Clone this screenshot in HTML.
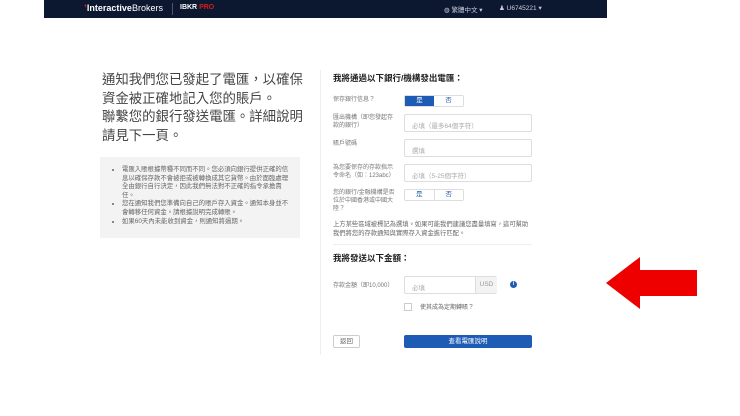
<!DOCTYPE html>
<html><head><meta charset="utf-8"><style>
*{margin:0;padding:0;box-sizing:border-box}
body{width:740px;height:416px;background:#fff;position:relative;overflow:hidden;font-family:"Liberation Sans","Noto Sans CJK TC",sans-serif;color:#333}
.a{position:absolute}
.nav{left:44px;top:0;width:563px;height:18px;background:#0b1830}
.h1{left:102px;top:71px;font-size:13.4px;line-height:18.5px;color:#444;white-space:nowrap}
.box{left:100px;top:157px;width:200px;height:81px;background:#f3f3f3}
.box ul{position:absolute;left:14px;top:9px;width:178px;font-size:6.4px;line-height:8.6px;color:#666;padding-left:8px}
.lbl{font-size:6px;line-height:8px;color:#777;left:333px;width:62px}
.inp{left:404px;width:128px;height:18px;border:1px solid #ddd;border-radius:2px;font-size:6.5px;color:#aaa;padding:5px 7px}
.tg{left:404px;width:60px;height:12px;border:1px solid #ddd;border-radius:2px;display:flex;font-size:6.5px}
.tg span{flex:1;text-align:center;line-height:10px;color:#2b5ca8}
.tt{left:333px;font-size:8.5px;font-weight:bold;color:#222}
</style></head><body>
<div class="a nav">
 <div class="a" style="left:40px;top:3px;font-size:9px;color:#fff;"><span style="color:#d81b1b">&#x275C;</span><b>Interactive</b>Brokers</div>
 <div class="a" style="left:128px;top:3px;width:1px;height:12px;background:#556"></div>
 <div class="a" style="left:136px;top:4px;font-size:7px;color:#fff;font-weight:bold">IBKR <span style="color:#d81b1b">PRO</span></div>
 <div class="a" style="left:400px;top:4px;font-size:6.5px;color:#ccd">◍ 繁體中文 ▾</div>
 <div class="a" style="left:455px;top:4px;font-size:6.5px;color:#ccd">&#9823; U6745221 ▾</div>
</div>
<div class="a h1">通知我們您已發起了電匯，以確保<br>資金被正確地記入您的賬戶。<br>聯繫您的銀行發送電匯。詳細說明<br>請見下一頁。</div>
<div class="a box"><ul>
<li>電匯入賬根據幣種不同而不同。您必須向銀行提供正確的信息以確保存款不會被拒或被轉換成其它貨幣。由於面臨處理全由銀行自行決定，因此我們無法對不正確的指令承擔責任。</li>
<li>您在通知我們您準備向自己的賬戶存入資金。通知本身並不會轉移任何資金。請根據說明完成轉賬。</li>
<li>如果60天內未能收到資金，則通知將過期。</li></ul></div>
<div class="a" style="left:320px;top:70px;width:1px;height:285px;background:#eee"></div>
<div class="a tt" style="top:72px">我將通過以下銀行/機構發出電匯：</div>
<div class="a lbl" style="top:96px">保存銀行信息？</div>
<div class="a tg" style="top:95px"><span style="background:#1d5bb5;color:#fff">是</span><span>否</span></div>
<div class="a lbl" style="top:114px">匯出機構（即您發起存款的銀行）</div>
<div class="a inp" style="top:114px">必填（最多64個字符）</div>
<div class="a lbl" style="top:140px">賬戶號碼</div>
<div class="a inp" style="top:139px">選填</div>
<div class="a lbl" style="top:164px">為您要保存的存款指示令命名（如：123abc）</div>
<div class="a inp" style="top:164px">必填（5-25個字符）</div>
<div class="a lbl" style="top:189px">您的銀行/金融機構是否位於中國香港或中國大陸？</div>
<div class="a tg" style="top:189px"><span>是</span><span style="border-left:1px solid #ddd">否</span></div>
<div class="a" style="left:333px;top:221px;width:200px;font-size:6.3px;line-height:8.5px;color:#666">上方某些區域被標記為選填。如果可能我們建議您盡量填寫，這可幫助我們將您的存款通知與實際存入資金進行匹配。</div>
<div class="a" style="left:333px;top:244px;width:199px;height:1px;background:#eee"></div>
<div class="a tt" style="top:252px">我將發送以下金額：</div>
<div class="a lbl" style="top:282px">存款金額（即10,000）</div>
<div class="a inp" style="top:276px;width:93px;padding:0"><span class="a" style="left:7px;top:5px">必填</span><span class="a" style="left:70px;top:0;width:22px;height:16px;background:#f3f3f3;border-left:1px solid #ddd;text-align:center;line-height:16px;color:#999">USD</span></div>
<div class="a" style="left:510px;top:281px;width:7px;height:7px;border-radius:50%;background:#1d5bb5;color:#fff;font-size:5px;text-align:center;line-height:7px;font-weight:bold">i</div>
<div class="a" style="left:404px;top:303px;width:8px;height:8px;border:1px solid #ccc"></div>
<div class="a" style="left:420px;top:302px;font-size:6px;color:#666">使其成為定期轉賬？</div>
<div class="a" style="left:333px;top:335px;width:27px;height:13px;border:1px solid #ccc;border-radius:2px;font-size:6.5px;text-align:center;line-height:11px;color:#666">返回</div>
<div class="a" style="left:404px;top:335px;width:128px;height:13px;background:#1d5bb5;border-radius:2px;font-size:6.5px;text-align:center;line-height:13px;color:#fff">查看電匯說明</div>
<svg class="a" style="left:606px;top:257px" width="92" height="52"><polygon points="0,26 34,0 34,13 91,13 91,39 34,39 34,52" fill="#ee0000"/></svg>
</body></html>
